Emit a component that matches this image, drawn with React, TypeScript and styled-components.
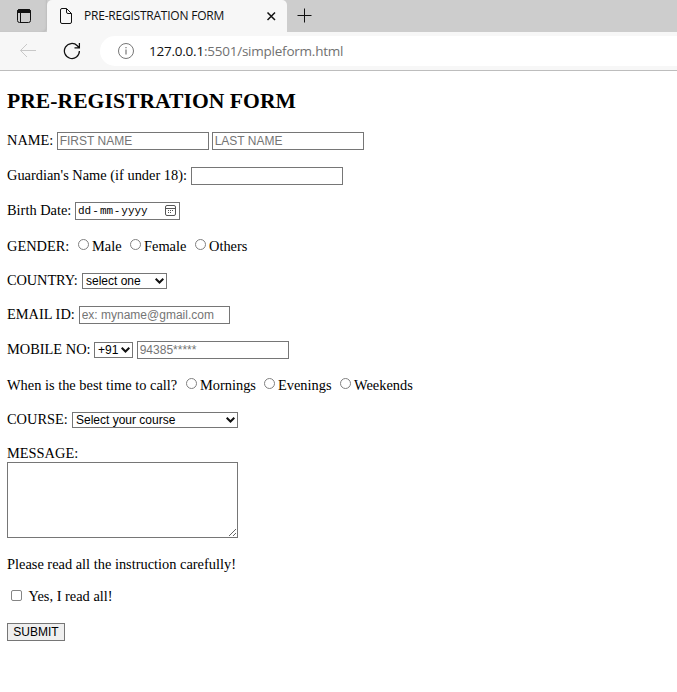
import React from "react";
import styled, { createGlobalStyle } from "styled-components";

const Global = createGlobalStyle`
  * { box-sizing: border-box; }
  html, body { margin: 0; background: #fff; overflow: hidden; }
`;

const Browser = styled.div`
  width: 677px;
  height: 692px;
  overflow: hidden;
  background: #fff;
`;
const TabStrip = styled.div`
  display: flex;
  height: 32px;
  background: #cdcdcd;
`;
const TabActions = styled.div`
  width: 47px;
  padding: 8px 0 0 16px;
  border-radius: 0 0 4px 0;
  box-shadow: inset -2px -1px 2px -1px #bdbdbd;
`;
const Tab = styled.div`
  display: flex;
  align-items: center;
  width: 240px;
  height: 32px;
  padding-left: 12px;
  background: #f7f7f7;
  border-radius: 5px 5px 0 0;
`;
const TabTitle = styled.span`
  width: 177px;
  margin-left: 11px;
  white-space: nowrap;
  font: 12px/16px "Open Sans", sans-serif;
  letter-spacing: -0.22px;
  color: #111;
`;
const NewTab = styled.div`
  padding: 7px 0 0 9px;
`;
const Toolbar = styled.div`
  display: flex;
  align-items: center;
  height: 39px;
  padding-left: 19px;
  background: #f7f7f7;
  border-bottom: 1px solid #bdbdbd;
`;
const Address = styled.div`
  display: flex;
  align-items: center;
  flex: 1;
  height: 30px;
  margin-left: 19px;
  padding-left: 17px;
  background: #fff;
  border-radius: 15px 0 0 15px;
`;
const Url = styled.span`
  margin-left: 14px;
  white-space: nowrap;
  font: 13.5px/18px "Open Sans", sans-serif;
  letter-spacing: -0.23px;
  color: #717171;
`;
const Host = styled.span`
  color: #111;
`;
const Icon = styled.svg<{ $gap?: number; $ink?: string }>`
  display: block;
  flex: none;
  margin-left: ${(p) => p.$gap ?? 0}px;
  fill: none;
  stroke: ${(p) => p.$ink ?? "#111"};
`;

const Form = styled.form`
  padding: 17px 7px 0;
  font: 14.4px/18px "Liberation Serif", serif;
  color: #000;
`;
const Title = styled.h2`
  margin: 0 0 18px;
  height: 26px;
  font-size: 21.6px;
  line-height: 26px;
  letter-spacing: 0.04px;
  white-space: nowrap;
`;
const Row = styled.div<{ $after?: number }>`
  display: flex;
  align-items: center;
  height: 18px;
  margin-bottom: ${(p) => p.$after ?? 17}px;
`;
const Label = styled.label<{ $w: number; $track?: number; $lift?: boolean }>`
  flex: none;
  width: ${(p) => p.$w}px;
  margin-bottom: ${(p) => (p.$lift ? 2 : 0)}px;
  letter-spacing: ${(p) => p.$track ?? 0}px;
  white-space: nowrap;
`;
const TextInput = styled.input<{ $w?: number; $gap?: number }>`
  width: ${(p) => p.$w ?? 152}px;
  height: 18px;
  margin: 0 0 0 ${(p) => p.$gap ?? 0}px;
  padding: 0 1.7px;
  border: 1px solid #767676;
  border-radius: 0;
  outline: none;
  font: 12px "Liberation Sans", sans-serif;
  &::placeholder { color: #757575; opacity: 1; }
`;
const DateField = styled.div`
  display: flex;
  align-items: center;
  width: 105px;
  height: 18px;
  padding-left: 2px;
  border: 1px solid #767676;
  font: 11px/16px "Liberation Mono", monospace;
`;
const DatePart = styled.span<{ $w: number }>`
  width: ${(p) => p.$w}px;
  text-align: center;
`;
const SelectBox = styled.div<{ $w: number }>`
  display: grid;
  align-items: center;
  width: ${(p) => p.$w}px;
  height: 16px;
`;
const Select = styled.select`
  grid-area: 1 / 1;
  width: 100%;
  height: 16px;
  margin: 0;
  padding: 0 3px;
  appearance: none;
  border: 1px solid #767676;
  border-radius: 0;
  background: #fff;
  color: #000;
  font: 12px/14px "Liberation Sans", sans-serif;
`;
const Chevron = styled.svg`
  grid-area: 1 / 1;
  justify-self: end;
  margin-right: 3px;
  fill: none;
  stroke: #111;
  stroke-width: 2;
  pointer-events: none;
`;
const Radio = styled.input`
  flex: none;
  appearance: none;
  width: 11px;
  height: 11px;
  margin: 0 3px 3px 0;
  border: 1px solid #808080;
  border-radius: 50%;
  background: #fff;
`;
const Checkbox = styled.input`
  flex: none;
  appearance: none;
  width: 11px;
  height: 11px;
  margin: 0 6.5px 1px 4px;
  border: 1px solid #858585;
  border-radius: 2px;
  background: #fff;
`;
const MessageArea = styled.textarea`
  display: block;
  width: 231px;
  height: 76px;
  margin: 0 0 17px;
  border: 1px solid #767676;
  border-radius: 0;
  resize: both;
`;
const Submit = styled.button`
  display: block;
  width: 58px;
  height: 18px;
  margin: 0;
  padding: 0;
  border: 1px solid #767676;
  border-radius: 0;
  background: #efefef;
  color: #000;
  font: 12px/16px "Liberation Sans", sans-serif;
`;

function Dropdown({ text, width }: { text: string; width: number }) {
  return (
    <SelectBox $w={width}>
      <Select><option>{text}</option></Select>
      <Chevron width="9" height="6" viewBox="0 0 9 6"><path d="M.7.8 4.5 4.5 8.3.8" /></Chevron>
    </SelectBox>
  );
}

function Choices({ name, items }: { name: string; items: [string, number][] }) {
  return <>{items.map(([text, width]) => (
    <React.Fragment key={text}>
      <Radio type="radio" name={name} />
      <Label $w={width}>{text}</Label>
    </React.Fragment>
  ))}</>;
}

export default function App() {
  return (
    <Browser>
      <Global />
      <TabStrip>
        <TabActions>
          <Icon width="16" height="16" viewBox="0 0 16 16">
            <rect x="1.5" y="1.5" width="13" height="13" rx="2" />
            <path d="M1.5 3.5Q1.5 1.5 3.5 1.5h9q2 0 2 2V4.5h-13z" fill="#111" />
            <path d="M4.5 5v9.5" />
          </Icon>
        </TabActions>
        <Tab>
          <Icon width="14" height="16" viewBox="0 0 14 16">
            <path d="M3 .5h4.5L12.5 5.5V14q0 1.5-1.5 1.5H3Q1.5 15.5 1.5 14V2Q1.5.5 3 .5zM7.5.5V4q0 1.5 1.5 1.5h3.5" />
          </Icon>
          <TabTitle>PRE-REGISTRATION FORM</TabTitle>
          <Icon width="16" height="16" viewBox="0 0 16 16" $gap={2}>
            <path d="m4.5 4.5 7.5 7.5M12 4.5 4.5 12" strokeWidth="1.5" />
          </Icon>
        </Tab>
        <NewTab>
          <Icon width="17" height="17" viewBox="0 0 17 17"><path d="M8.5 1.5v14M1.5 8.5h14" /></Icon>
        </NewTab>
      </TabStrip>
      <Toolbar>
        <Icon width="18" height="16" viewBox="0 0 18 16" $ink="#c8c8c8">
          <path d="M17 7.5H1.5M8 1 1.5 7.5 8 14" />
        </Icon>
        <Icon width="18" height="18" viewBox="0 0 18 18" $gap={26}>
          <path d="M16.4 9a7.5 7.5 0 1 1-2.1-5.2l1.7 1.7M16.4 1v4.9h-4.9" strokeWidth="1.25" />
        </Icon>
        <Address>
          <Icon width="18" height="18" viewBox="0 0 18 18" $ink="#777">
            <circle cx="9" cy="9" r="7.5" />
            <path d="M9 7.5v5M9 5v1.2" strokeWidth="1.2" />
          </Icon>
          <Url><Host>127.0.0.1</Host>:5501/simpleform.html</Url>
        </Address>
      </Toolbar>
      <Form>
        <Title>PRE-REGISTRATION FORM</Title>
        <Row>
          <Label $w={50} $lift>NAME:</Label>
          <TextInput placeholder="FIRST NAME" />
          <TextInput placeholder="LAST NAME" $gap={3} />
        </Row>
        <Row>
          <Label $w={184} $lift>Guardian's Name (if under 18):</Label>
          <TextInput />
        </Row>
        <Row>
          <Label $w={68} $lift>Birth Date:</Label>
          <DateField>
            <DatePart $w={13}>dd</DatePart><DatePart $w={9}>-</DatePart>
            <DatePart $w={13}>mm</DatePart><DatePart $w={8}>-</DatePart>
            <DatePart $w={27}>yyyy</DatePart>
            <Icon width="12" height="12" viewBox="0 0 12 12" $gap={17} $ink="#555">
              <rect x=".5" y=".5" width="10" height="10" rx="1.5" />
              <path d="M.5 3.5h10M3 5.5h1M5 5.5h1M7 5.5h1M3 7.5h1M5 7.5h1" />
            </Icon>
          </DateField>
        </Row>
        <Row>
          <Label $w={71}>GENDER:</Label>
          <Choices name="gender" items={[["Male", 38], ["Female", 51], ["Others", 45]]} />
        </Row>
        <Row $after={16}>
          <Label $w={75} $track={-0.1} $lift>COUNTRY:</Label>
          <Dropdown text="select one" width={85} />
        </Row>
        <Row>
          <Label $w={72} $lift>EMAIL ID:</Label>
          <TextInput placeholder="ex: myname@gmail.com" $w={151} />
        </Row>
        <Row>
          <Label $w={87} $lift>MOBILE NO:</Label>
          <Dropdown text="+91" width={39} />
          <TextInput placeholder="94385*****" $gap={4} />
        </Row>
        <Row>
          <Label $w={179}>When is the best time to call?</Label>
          <Choices name="call" items={[["Mornings", 64], ["Evenings", 62], ["Weekends", 65]]} />
        </Row>
        <Row $after={15}>
          <Label $w={65} $lift>COURSE:</Label>
          <Dropdown text="Select your course" width={166} />
        </Row>
        <Row $after={0}><Label $w={100}>MESSAGE:</Label></Row>
        <MessageArea />
        <Row $after={14}><Label $w={240}>Please read all the instruction carefully!</Label></Row>
        <Row $after={18}>
          <Checkbox type="checkbox" />
          <Label $w={100}>Yes, I read all!</Label>
        </Row>
        <Submit type="button">SUBMIT</Submit>
      </Form>
    </Browser>
  );
}
